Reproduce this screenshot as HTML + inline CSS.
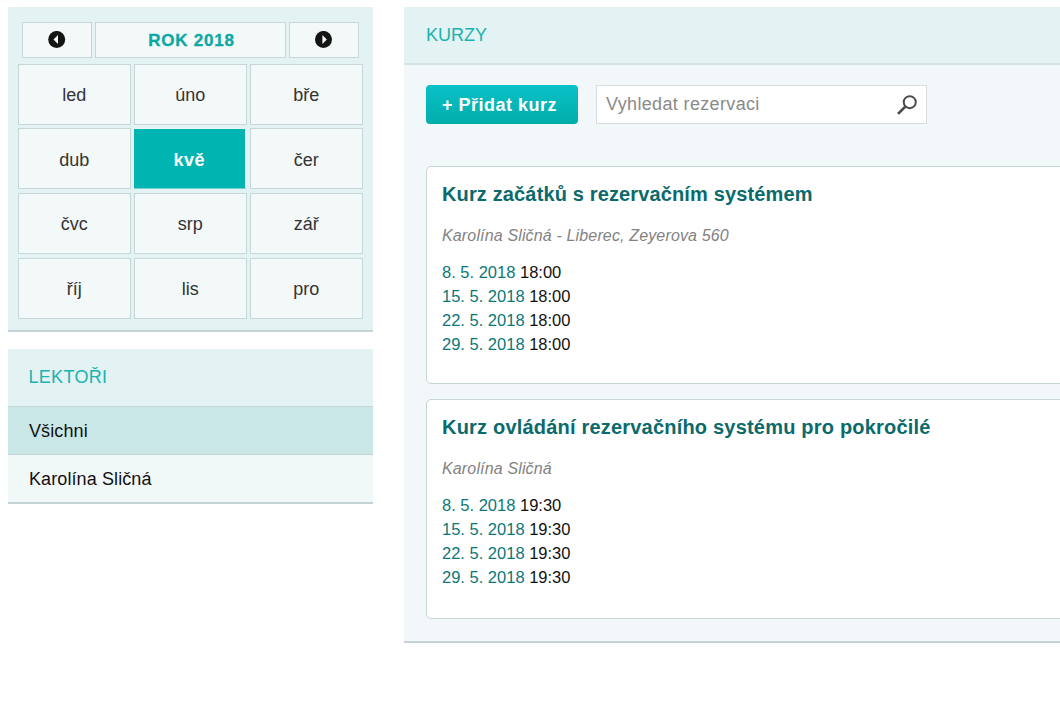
<!DOCTYPE html>
<html lang="cs">
<head>
<meta charset="utf-8">
<title>Kurzy</title>
<style>
*{box-sizing:border-box;margin:0;padding:0}
html,body{width:1060px;height:704px;overflow:hidden;background:#fff}
body{position:relative;font-family:"Liberation Sans",sans-serif;font-size:18px;color:#111}
.abs{position:absolute}
/* ---------- calendar panel ---------- */
#cal{position:absolute;left:8px;top:7px;width:365px;height:325px;background:#e3f2f2;border-bottom:2px solid #c4d3d4}
.hb{position:absolute;top:15px;height:36px;background:#f3f9f9;border:1px solid #c7d6d6;display:flex;align-items:center;justify-content:center}
.hb.t{color:#0fa7a5;font-weight:700;font-size:17px;letter-spacing:.8px;padding-top:2px;padding-left:2px;-webkit-text-stroke:.35px #0fa7a5}
.m{position:absolute;width:112.5px;height:61px;padding-top:2px;background:#f3f9f9;border:1px solid #c7d6d6;display:flex;align-items:center;justify-content:center;font-size:18px;color:#333}
.m.on{background:#00b4b2;border-color:#eaf4f4;border-left-width:0;border-right-width:2px;border-bottom-color:#75d4d3;color:#fff;font-weight:700;letter-spacing:.5px}
/* ---------- lecturers ---------- */
#lek{position:absolute;left:8px;top:349px;width:365px;height:155px;background:#e3f2f2;border-bottom:2px solid #c4d3d4}
#lek h2{position:absolute;left:20.5px;top:17.4px;font-size:18px;font-weight:400;color:#1ab3b1;line-height:22px;letter-spacing:.3px}
#lek .r{position:absolute;left:0;width:365px;height:48px;padding-left:21px;line-height:49px;font-size:18px;color:#111;letter-spacing:.1px}
#lek .r.sel{top:57px;background:#c9e7e7;border-top:1px solid #c2d6d6}
#lek .r.n{top:105px;background:#f1f8f8;border-top:1px solid #c4d3d3}
/* ---------- courses ---------- */
#kur{position:absolute;left:404px;top:7px;width:700px;height:635.5px;background:#f2f8f9;border-bottom:2px solid #c4d3d4}
#kur .hd{position:absolute;left:0;top:0;width:100%;height:58px;background:#e3f2f2;border-bottom:2px solid #d3e2e2}
#kur .hd h2{position:absolute;left:22px;top:17px;font-size:18px;font-weight:400;color:#1ab3b1;line-height:22px}
#add{position:absolute;left:22px;top:78px;width:152px;height:39px;border-radius:4px;background:linear-gradient(#0ac1c8,#00adaa);color:#fff;font-weight:700;font-size:18px;line-height:40px;text-align:center;letter-spacing:.5px;padding-right:5px}
#srch{position:absolute;left:192px;top:78px;width:331px;height:39px;background:#fff;border:1px solid #d8dede;padding-left:9px;line-height:37px;color:#8a8a8a;font-size:18px;letter-spacing:.35px}
#srch svg{position:absolute;left:299px;top:8px}
.card{position:absolute;left:22px;width:700px;background:#fff;border:1px solid #c8d5d5;border-radius:5px}
.card h3{position:absolute;left:15px;top:13.8px;font-size:20px;line-height:26px;font-weight:700;color:#0a6a6c;white-space:nowrap;letter-spacing:.14px}
.card .sub{position:absolute;left:15px;top:59px;font-size:16px;line-height:20px;font-style:italic;color:#828282;white-space:nowrap;letter-spacing:.15px}
.card .d{position:absolute;left:15px;top:93px;font-size:16.5px;line-height:24px;color:#111;white-space:nowrap}
.card .d a{color:#0b7778;text-decoration:none}
</style>
</head>
<body>

<div id="cal">
  <div class="hb" style="left:14px;width:70px"><svg width="18" height="18" viewBox="0 0 18 18"><circle cx="8.7" cy="8.45" r="8.5" fill="#141414"/><path d="M10 3.9 L10 13 L5.5 8.45 Z" fill="#f6fafa"/></svg></div>
  <div class="hb t" style="left:87px;width:191px">ROK 2018</div>
  <div class="hb" style="left:281px;width:70px"><svg width="18" height="18" viewBox="0 0 18 18"><circle cx="8.5" cy="8.45" r="8.5" fill="#141414"/><path d="M7.4 3.9 L7.4 13 L11.8 8.45 Z" fill="#f6fafa"/></svg></div>

  <div class="m" style="left:10px;top:57px">led</div>
  <div class="m" style="left:126px;top:57px">úno</div>
  <div class="m" style="left:242px;top:57px">bře</div>

  <div class="m" style="left:10px;top:121.4px;padding-top:4px">dub</div>
  <div class="m on" style="left:126px;top:121.4px;padding-top:4px">kvě</div>
  <div class="m" style="left:242px;top:121.4px;padding-top:4px">čer</div>

  <div class="m" style="left:10px;top:186px">čvc</div>
  <div class="m" style="left:126px;top:186px">srp</div>
  <div class="m" style="left:242px;top:186px">zář</div>

  <div class="m" style="left:10px;top:250.6px">říj</div>
  <div class="m" style="left:126px;top:250.6px">lis</div>
  <div class="m" style="left:242px;top:250.6px">pro</div>
</div>

<div id="lek">
  <h2>LEKTOŘI</h2>
  <div class="r sel">Všichni</div>
  <div class="r n">Karolína Sličná</div>
</div>

<div id="kur">
  <div class="hd"><h2>KURZY</h2></div>
  <div id="add">+ Přidat kurz</div>
  <div id="srch">Vyhledat rezervaci
    <svg width="22" height="22" viewBox="0 0 22 22"><circle cx="13.75" cy="8.15" r="6" fill="none" stroke="#4a4a4a" stroke-width="2"/><path d="M9.75 12.15 L2.05 19.85" stroke="#4a4a4a" stroke-width="2.7"/></svg>
  </div>

  <div class="card" style="top:159px;height:218.4px">
    <h3>Kurz začátků s rezervačním systémem</h3>
    <div class="sub">Karolína Sličná - Liberec, Zeyerova 560</div>
    <div class="d"><a>8. 5. 2018</a> 18:00<br><a>15. 5. 2018</a> 18:00<br><a>22. 5. 2018</a> 18:00<br><a>29. 5. 2018</a> 18:00</div>
  </div>

  <div class="card" style="top:392.2px;height:219.4px">
    <h3 style="letter-spacing:.2px">Kurz ovládání rezervačního systému pro pokročilé</h3>
    <div class="sub">Karolína Sličná</div>
    <div class="d"><a>8. 5. 2018</a> 19:30<br><a>15. 5. 2018</a> 19:30<br><a>22. 5. 2018</a> 19:30<br><a>29. 5. 2018</a> 19:30</div>
  </div>
</div>

</body>
</html>
